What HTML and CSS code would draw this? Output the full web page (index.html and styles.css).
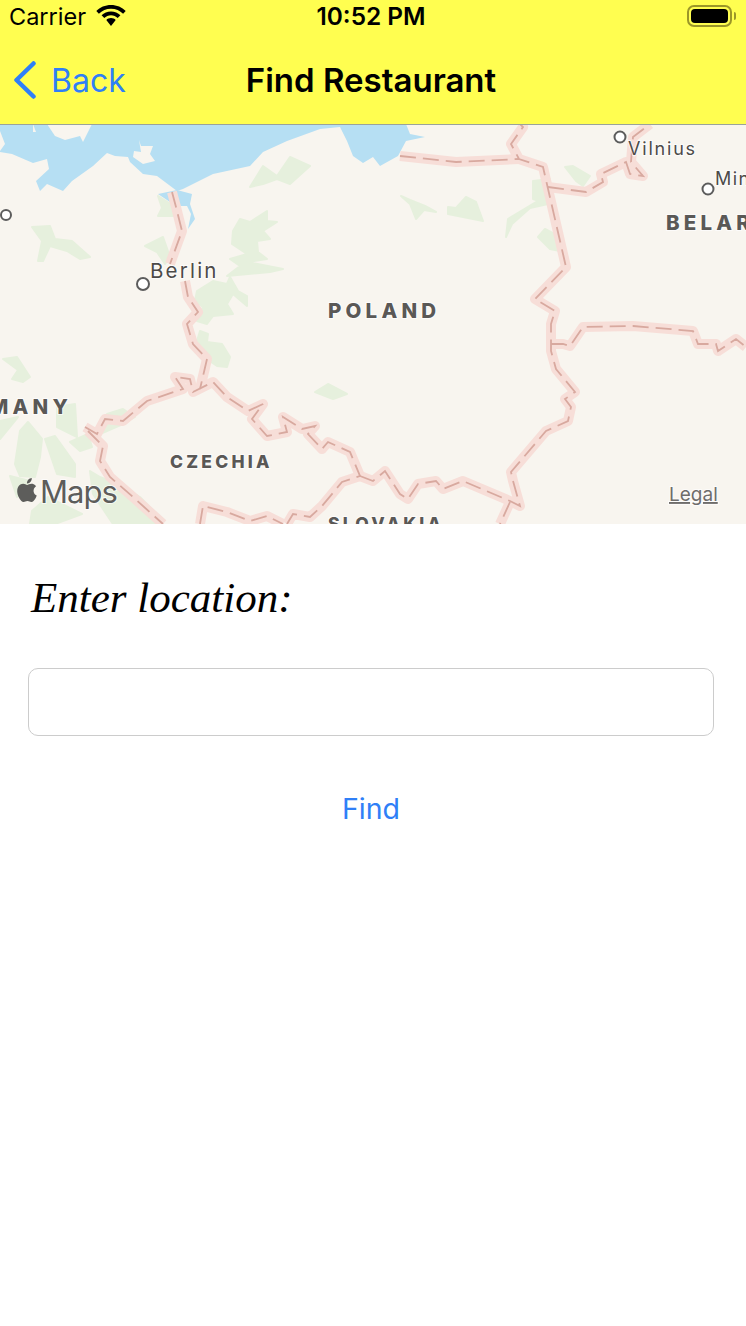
FILE: index.html
```html
<!DOCTYPE html>
<html lang="en">
<head>
<meta charset="utf-8">
<title>Find Restaurant</title>
<link rel="stylesheet" href="styles.css">
</head>
<body>
<div class="screen">
  <header class="top">
    <div class="status">
      <div class="status-left">
        <span class="carrier">Carrier</span>
        <svg class="wifi" width="30" height="22" viewBox="0 0 30 22"><path d="M15 0C9.200 0 4 2.300.3 6l2.600 2.800C6 5.700 10.300 3.800 15 3.800s9 1.900 12.100 5L29.700 6C26 2.300 20.800 0 15 0z"/><path d="M15 6.400c-3.700 0-7 1.500-9.400 3.900l2.700 2.800c1.700-1.700 4.100-2.800 6.700-2.800s5 1.100 6.700 2.800l2.700-2.800C22 7.900 18.700 6.400 15 6.400z"/><path d="M15 13c-1.900 0-3.500.7-4.700 1.900L15 21l4.700-6.100C18.500 13.700 16.900 13 15 13z"/></svg>
      </div>
      <span class="clock">10:52 PM</span>
      <div class="status-right">
        <div class="battery"><div class="battery-fill"></div></div>
        <div class="battery-tip"></div>
      </div>
    </div>
    <nav class="nav">
      <a class="back">
        <svg class="chevron" width="24" height="38" viewBox="0 0 24 38"><path d="M20.500 2.500 3.500 19l17 16.500"/></svg>
        <span>Back</span>
      </a>
      <h1 class="title">Find Restaurant</h1>
      <div></div>
    </nav>
  </header>

  <section class="map">
    <svg class="map-svg" width="746" height="400" viewBox="0 0 746 400">
      <path class="water" d="M0 0V28L12 30 33 39 47 35 49 45 36 57 40 67 47 60 63 67 72 57 93 42 107 29 115 32 128 33 130 38 143 50 157 52 177 67 183 65 213 50 250 42 263 28 287 17 320 5 340 3 347 17 353 32 363 39 373 33 380 42 398 32 406 17 425 13 410 10 406 0Z"/>
      <path class="land" d="M47 0 55 12 65 16 80 12 83 18 92 0ZM33 0 36 8 33 8ZM0 7 5 20 0 27ZM139 16 141 22 153 22 150 30 155 37 143 40 133 33 134 27 141 28Z"/>
      <path class="water" d="M158 70 177 66 192 70 190 80 195 95 188 105 191 90 187 82 178 82 170 78Z"/>
      <g class="green">
        <path d="M32 103 50 102 55 115 72 117 90 133 80 135 67 127 50 122 43 137 38 137 42 117Z"/>
        <path d="M145 122 163 113 170 133 165 140 157 128Z"/>
        <path d="M158 72 177 84 172 88 176 92 158 92 162 84Z"/>
        <path d="M240 95 250 98 267 87 267 97 277 98 263 107 270 115 257 117 258 128 267 135 247 138 283 145 270 148 227 152 240 142 230 135 247 130 232 120 233 107Z"/>
        <path d="M197 167 213 157 227 160 230 153 238 167 247 172 247 182 233 170 227 180 233 190 213 192 207 200 197 197 203 183 195 177Z"/>
        <path d="M250 63 263 42 277 52 290 33 310 42 290 60 277 55 263 60Z"/>
        <path d="M401 72 410 76 425 82 436 88 424 86 416 95 410 80Z"/>
        <path d="M448 83 456 84 466 73 476 78 483 97 463 93 448 90Z"/>
        <path d="M506 113 508 95 536 78 548 80 533 75 533 57 550 55 548 80 530 84 512 100Z"/>
        <path d="M538 113 545 105 560 113 560 127 550 125Z"/>
        <path d="M565 43 573 42 590 52 583 62 576 57Z"/>
        <path d="M3 235 17 233 30 253 23 258 12 255 18 246Z"/>
        <path d="M200 207 208 210 207 218 222 220 230 233 227 243 217 242 207 235 197 217Z"/>
        <path d="M315 268 328 260 347 270 333 275Z"/>
        <path d="M0 297 18 293 0 315Z"/>
        <path d="M57 283 75 280 77 313 67 308 57 303Z"/>
        <path d="M20 307 28 298 42 315 40 333 35 353 20 352 15 340Z"/>
        <path d="M45 315 55 312 75 340 75 353 57 350Z"/>
        <path d="M70 318 88 310 92 323 80 327Z"/>
        <path d="M10 352 30 357 17 373Z"/>
        <path d="M32 387 48 373 82 390 55 400 30 400Z"/>
        <path d="M90 347 100 353 117 360 140 373 163 397 150 400 113 400 93 370Z"/>
        <path d="M107 290 123 285 135 293 123 300 100 310Z"/>
      </g>
      <g class="borders">
        <path id="b1" d="M172 68 176 83 182 107 170 140M185 157 188 173 198 188 187 200 193 220 207 235 200 265"/>
        <path id="b2" d="M85 303 97 310 105 295 123 297 147 277 183 265 175 253 190 255 193 268 213 258 227 273 248 287 263 280 252 295 267 312 287 308 283 293 302 305 315 302 308 310 322 325 328 318 350 328 360 352 342 358 322 382 310 393 293 390 287 400"/>
        <path id="b3" d="M88 307 103 322 100 337 110 353 133 373 163 400"/>
        <path id="b4" d="M200 400 203 382 227 388 250 397 267 392 283 400"/>
        <path id="b5" d="M360 352 373 357 385 347 400 370 408 375 418 360 436 357 443 365 463 357 510 377 520 382 513 357 511 348 546 307 568 297 571 283 565 275 575 268 556 245 551 227 551 200 555 187 535 175 566 143 543 43 519 35 511 20 523 3 520 0"/>
        <path id="b6" d="M510 378 500 400"/>
        <path id="b7" d="M400 32 456 38 519 35"/>
        <path id="b8" d="M548 63 586 68 603 58 601 50 626 38 630 50 643 52 631 38 633 13 650 0"/>
        <path id="b9" d="M551 220 563 220 570 222 583 203 633 202 693 207 698 220 716 220 718 227 736 215 746 223"/>
      </g>
      <g class="borders-core">
        <use href="#b1"/><use href="#b2"/><use href="#b3"/><use href="#b4"/><use href="#b5"/><use href="#b6"/><use href="#b7"/><use href="#b8"/><use href="#b9"/>
      </g>
      <g class="city-dot">
        <circle cx="6" cy="91" r="5"/>
        <circle cx="143" cy="160" r="6"/>
        <circle cx="620" cy="13" r="5.500"/>
        <circle cx="708" cy="65" r="5.500"/>
      </g>
      <text class="city large" x="150" y="154">Berlin</text>
      <text class="city wide" x="628" y="31">Vilnius</text>
      <text class="city" x="715" y="61">Min</text>
      <text class="country" x="328" y="194">POLAND</text>
      <text class="country" x="666" y="106">BELAR</text>
      <text class="country" x="-11" y="290">MANY</text>
      <text class="country small" x="170" y="344">CZECHIA</text>
      <text class="country small" x="328" y="406">SLOVAKIA</text>
      <path class="apple" transform="translate(15 354)" d="M12.152 6.896c-.948 0-2.415-1.078-3.960-1.040-2.040.027-3.910 1.183-4.961 3.014-2.117 3.675-.546 9.103 1.519 12.090 1.013 1.454 2.208 3.090 3.792 3.039 1.520-.065 2.090-.987 3.935-.987 1.831 0 2.350.987 3.960.948 1.637-.026 2.676-1.480 3.676-2.948 1.156-1.688 1.636-3.325 1.662-3.415-.039-.013-3.182-1.221-3.220-4.857-.026-3.040 2.480-4.494 2.597-4.559-1.429-2.090-3.623-2.324-4.390-2.376-2-.156-3.675 1.090-4.610 1.090zM15.530 3.830c.843-1.012 1.400-2.427 1.245-3.830-1.207.052-2.662.805-3.532 1.818-.780.896-1.454 2.338-1.273 3.714 1.338.104 2.715-.688 3.559-1.701"/>
      <text class="maps" x="40" y="379">Maps</text>
      <text class="legal" x="669" y="377">Legal</text>
    </svg>
  </section>

  <main class="form">
    <label class="prompt" for="loc">Enter location:</label>
    <input class="field" id="loc" type="text">
    <button class="find" type="button">Find</button>
  </main>
</div>
</body>
</html>
```

FILE: styles.css
```css
* { box-sizing: border-box; }
html, body { margin: 0; padding: 0; background: #fff; }
body { font-family: Inter, "Liberation Sans", sans-serif; color: #000; }
.screen { width: 746px; height: 1326px; overflow: hidden; display: flex; flex-direction: column; }

.top { background: #fffe50; height: 125px; border-bottom: 1px solid #9aa39a; flex: none; }
.status { height: 36px; display: grid; grid-template-columns: 1fr auto 1fr; align-items: center; padding: 0 10px 4px; }
.status-left { display: flex; align-items: center; gap: 10px; }
.carrier { font-size: 23.500px; font-weight: 400; margin-left: -1px; }
.wifi { fill: #000; }
.clock { font-size: 24.400px; font-weight: 600; margin-right: 4px; }
.status-right { display: flex; align-items: center; justify-content: flex-end; gap: 2px; }
.battery { width: 45px; height: 22px; border: 2px solid #9b9628; border-radius: 7px; padding: 2px; }
.battery-fill { width: 100%; height: 100%; background: #000; border-radius: 4px; }
.battery-tip { width: 2px; height: 8px; background: #9b9628; border-radius: 0 2px 2px 0; }

.nav { height: 88px; display: grid; grid-template-columns: 1fr auto 1fr; align-items: center; padding: 0 14px; }
.back { display: flex; align-items: center; gap: 14px; color: #2f7ff7; font-size: 32px; }
.chevron { fill: none; stroke: #2f7ff7; stroke-width: 4.500; stroke-linecap: round; stroke-linejoin: round; margin-left: -1px; }
.title { margin: 0 4px 0 0; font-size: 33px; font-weight: 600; }

.map { height: 399px; flex: none; background: #f8f5ef; overflow: hidden; }
.map-svg { display: block; margin-top: -1px; }
.water { fill: #b6dff3; }
.land { fill: #f8f5ef; }
.green path { fill: #e6f0dd; stroke: #e6f0dd; stroke-width: 2; stroke-linejoin: round; }
.borders { fill: none; stroke: #f7ded8; stroke-width: 10; stroke-linejoin: round; }
.borders-core { fill: none; stroke: #d8a99f; stroke-width: 1.800; stroke-dasharray: 16 7; }
.city-dot circle { fill: #fff; stroke: #5c5c5c; stroke-width: 2; }
.city, .country, .maps, .legal { paint-order: stroke; stroke: rgba(255,255,255,.7); stroke-width: 2px; }
.city { font-size: 18px; letter-spacing: 1.500px; fill: #4c4a48; }
.city.wide { letter-spacing: 1.800px; }
.city.large { font-size: 20.500px; letter-spacing: 2.200px; }
.country { font-size: 20.500px; font-weight: 800; letter-spacing: 4.200px; fill: #5a5856; }
.country.small { font-size: 17.500px; letter-spacing: 3.200px; }
.apple { fill: #5d5d5b; }
.maps { font-size: 31px; letter-spacing: -1px; fill: #5d5d5b; }
.legal { font-size: 19px; fill: #6f6d6b; text-decoration: underline; }

.form { flex: 1; display: flex; flex-direction: column; padding: 0 32px 0 28px; }
.prompt { font-family: "Liberation Serif", serif; font-style: italic; font-size: 43px; line-height: 50px; margin: 49px 0 0 3px; }
.field { width: 686px; height: 68px; margin-top: 45px; border: 1px solid #ccc; border-radius: 10px; background: #fff; outline: none; }
.find { align-self: center; margin: 54px 0 0 0; padding: 0; border: 0; background: none; color: #2f7ff7; font-family: Inter, "Liberation Sans", sans-serif; font-size: 28.500px; line-height: 38px; }
```
